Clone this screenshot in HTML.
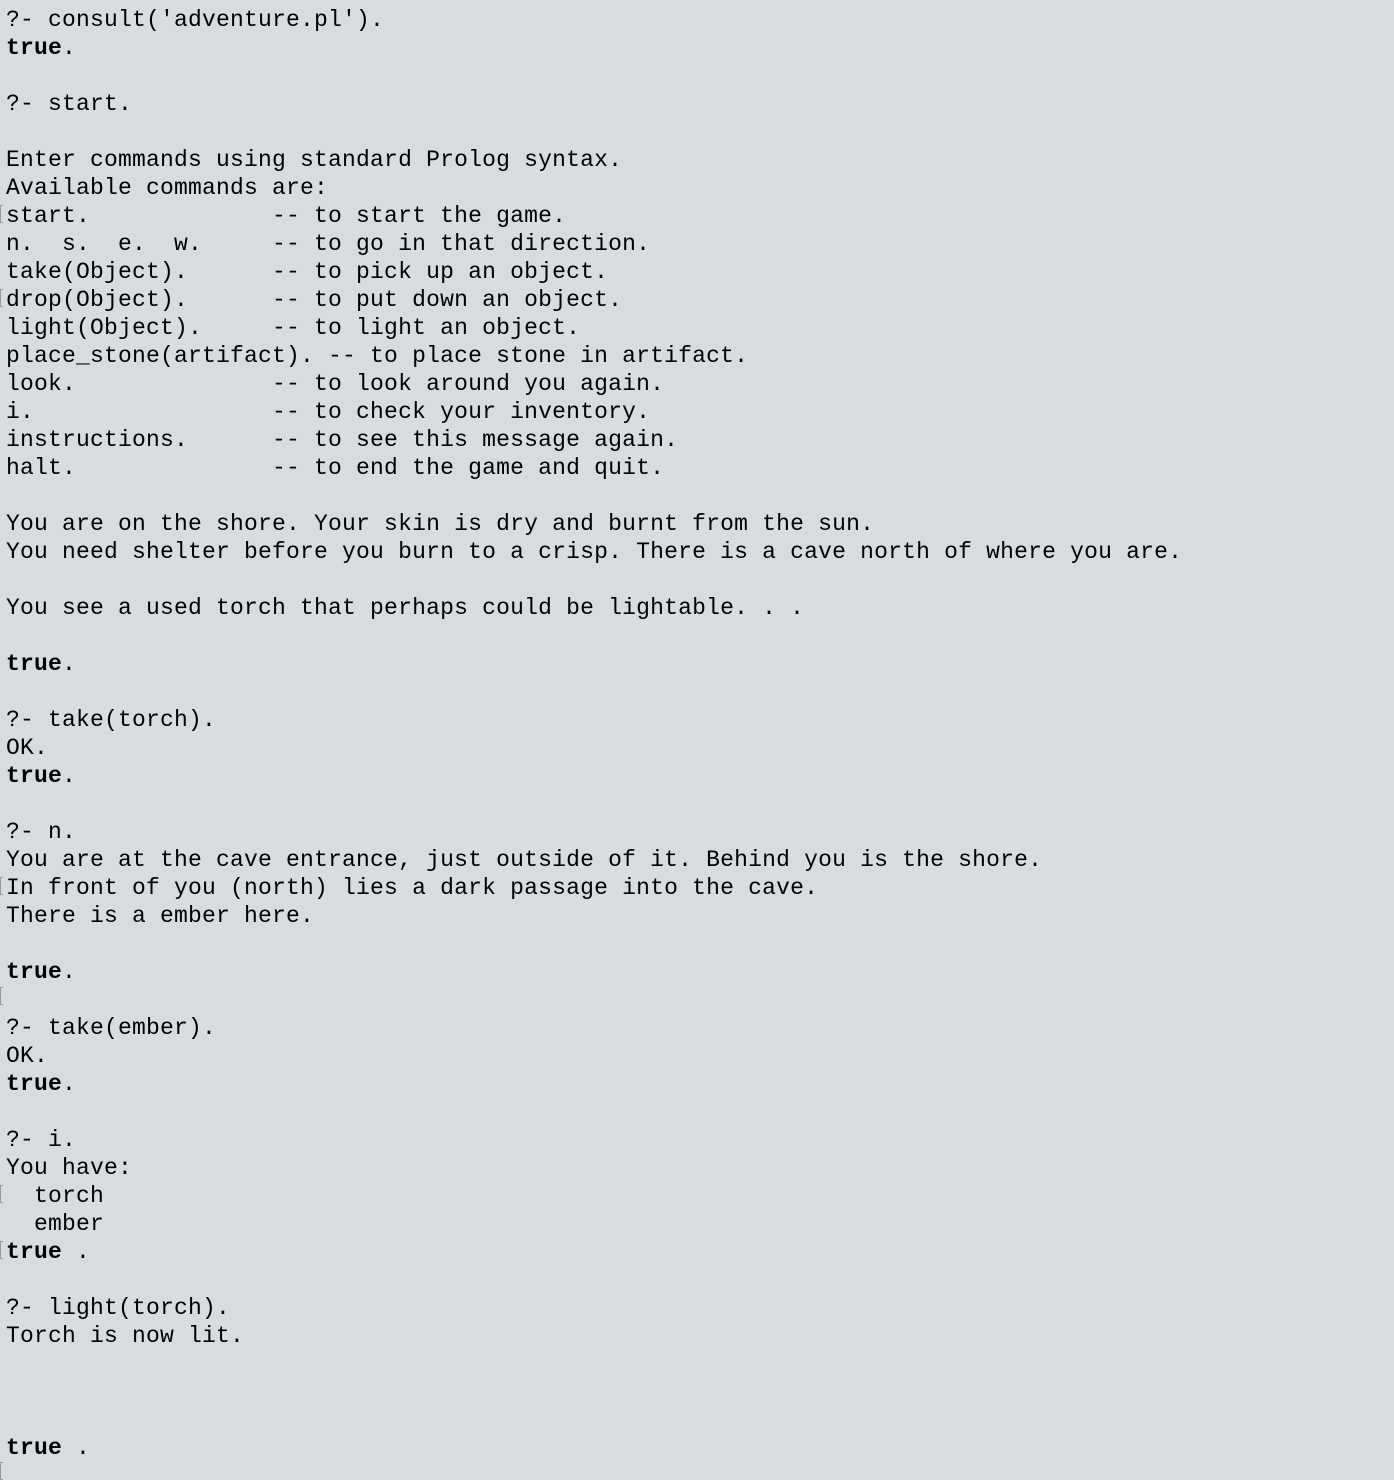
<!DOCTYPE html>
<html><head><meta charset="utf-8"><style>
html,body{margin:0;padding:0;background:#d7dce0;width:1394px;height:1470px;overflow:hidden;}
pre{position:absolute;left:6px;top:6px;margin:0;font-family:"Liberation Mono",monospace;font-size:23px;letter-spacing:0.2px;line-height:28px;color:#000;}
b{font-weight:bold;}
.m{position:absolute;left:0;width:3px;height:18px;border:1px solid #999;border-right:none;box-sizing:border-box;}
</style></head><body>
<pre>?- consult('adventure.pl').
<b>true</b>.

?- start.

Enter commands using standard Prolog syntax.
Available commands are:
start.             -- to start the game.
n.  s.  e.  w.     -- to go in that direction.
take(Object).      -- to pick up an object.
drop(Object).      -- to put down an object.
light(Object).     -- to light an object.
place_stone(artifact). -- to place stone in artifact.
look.              -- to look around you again.
i.                 -- to check your inventory.
instructions.      -- to see this message again.
halt.              -- to end the game and quit.

You are on the shore. Your skin is dry and burnt from the sun.
You need shelter before you burn to a crisp. There is a cave north of where you are.

You see a used torch that perhaps could be lightable. . .

<b>true</b>.

?- take(torch).
OK.
<b>true</b>.

?- n.
You are at the cave entrance, just outside of it. Behind you is the shore.
In front of you (north) lies a dark passage into the cave.
There is a ember here.

<b>true</b>.

?- take(ember).
OK.
<b>true</b>.

?- i.
You have:
  torch
  ember
<b>true</b> .

?- light(torch).
Torch is now lit.



<b>true</b> .
</pre>
<div class="m" style="top:205px"></div>
<div class="m" style="top:289px"></div>
<div class="m" style="top:877px"></div>
<div class="m" style="top:987px"></div>
<div class="m" style="top:1185px"></div>
<div class="m" style="top:1241px"></div>
<div class="m" style="top:1462px"></div>
</body></html>
